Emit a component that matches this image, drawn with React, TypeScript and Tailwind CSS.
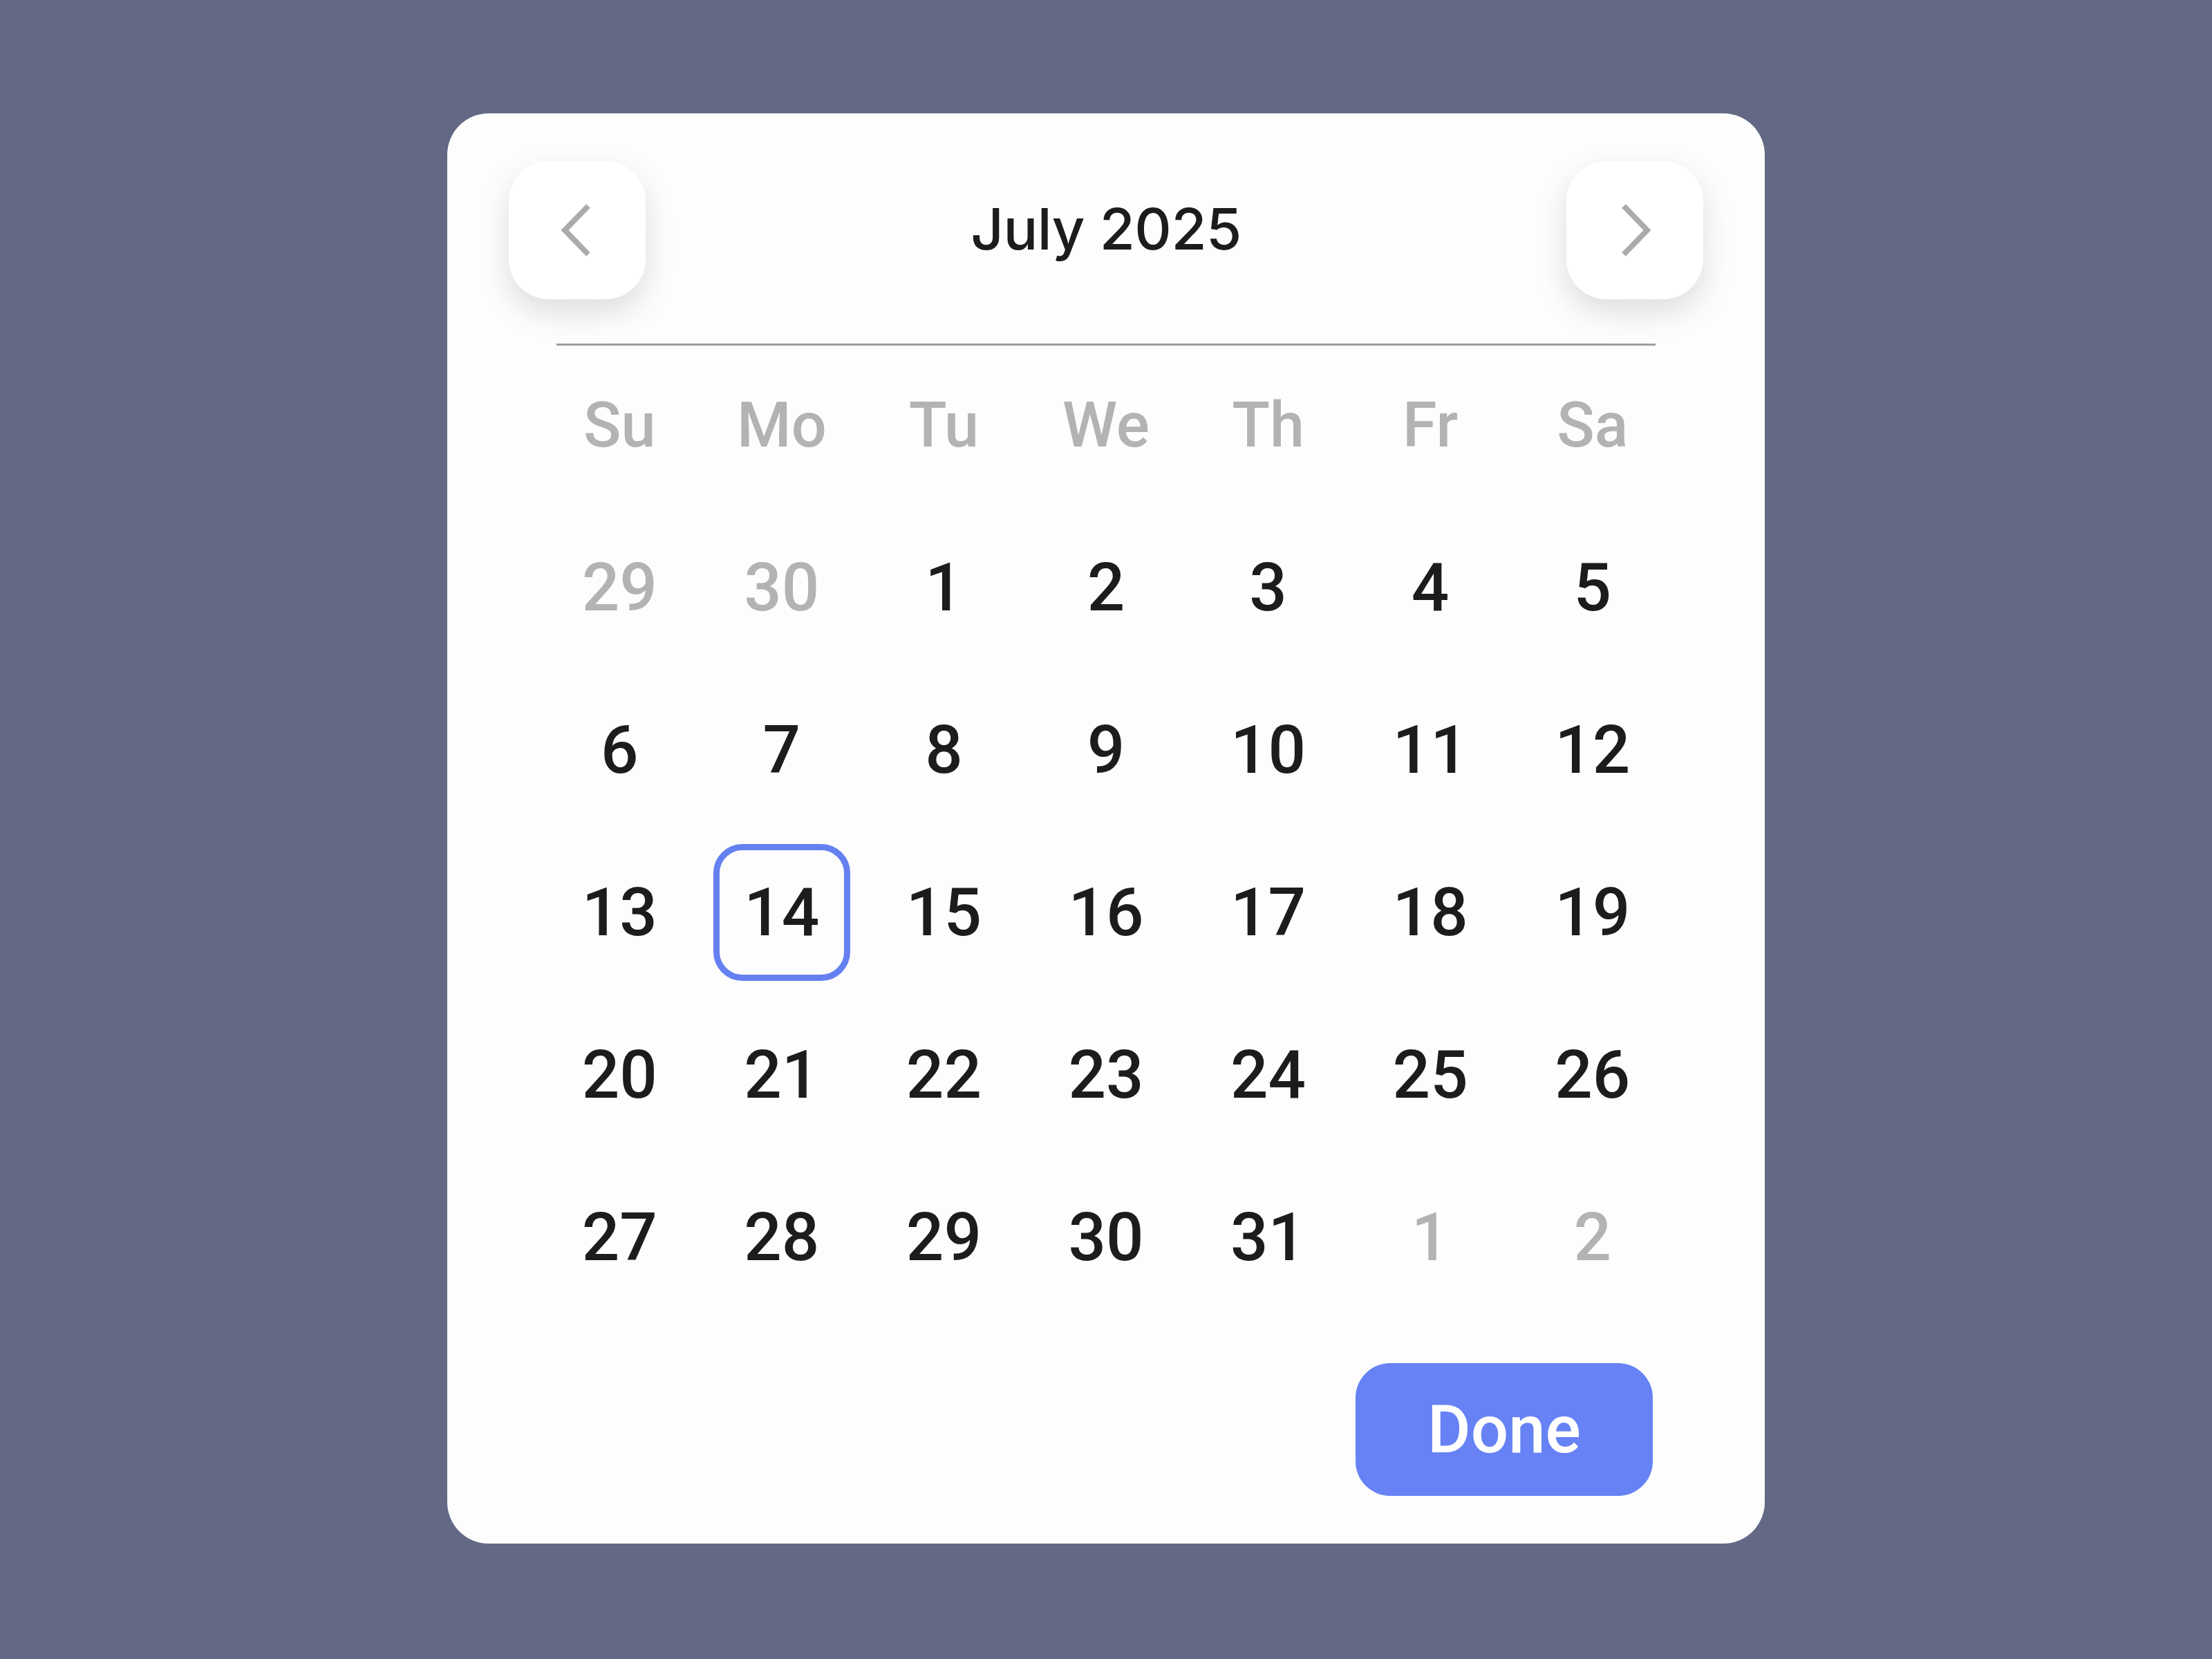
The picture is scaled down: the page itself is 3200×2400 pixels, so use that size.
import { useState } from 'react';

const weekdays = ['Su', 'Mo', 'Tu', 'We', 'Th', 'Fr', 'Sa'];

type Day = { n: number; muted?: boolean };

// July 2025 starts on a Tuesday, padded with the neighbouring months
const days: Day[] = [
  { n: 29, muted: true },
  { n: 30, muted: true },
  ...Array.from({ length: 31 }, (_, i) => ({ n: i + 1 })),
  { n: 1, muted: true },
  { n: 2, muted: true },
];

function Chevron({ dir }: { dir: 'left' | 'right' }) {
  const points = dir === 'right' ? '8,5 42,40 8,75' : '40,5 6,40 40,75';
  return (
    <svg width="48" height="80" viewBox="0 0 48 80" fill="none">
      <polyline points={points} stroke="#ababab" strokeWidth="8" strokeLinecap="butt" strokeLinejoin="miter" />
    </svg>
  );
}

function NavButton({ dir }: { dir: 'left' | 'right' }) {
  return (
    <button className="w-[198px] h-[200px] rounded-[58px] bg-white flex items-center justify-center shadow-[0_18px_44px_rgba(0,0,0,0.13)]">
      <Chevron dir={dir} />
    </button>
  );
}

export default function App() {
  const [selected, setSelected] = useState(14);

  return (
    <div className="min-h-screen w-full bg-[#636985] flex justify-center pt-[164px] font-['Roboto','Liberation_Sans',sans-serif]">
      <div className="w-[1906px] h-[2069px] rounded-[60px] bg-[#fdfdfd] px-[89px] pt-[69px] flex flex-col">
        <div className="h-[200px] flex items-center justify-between">
          <NavButton dir="left" />
          <h1 className="pb-[4px] text-[83px] leading-none font-medium text-[#1c1c1c] font-['Inter','Liberation_Sans',sans-serif] tracking-[-0.5px]">
            July 2025
          </h1>
          <NavButton dir="right" />
        </div>

        <div className="mt-[64px] mx-[69px] h-[3px] bg-[#9d9d9d]" />

        <div className="w-[1642px] mx-auto grid grid-cols-7">
          {weekdays.map((d) => (
            <div key={d} className="h-[235px] pb-[4px] flex items-center justify-center text-[90px] leading-none font-medium text-[#b3b3b3]">
              {d}
            </div>
          ))}
          {days.map((d, i) => {
            const isSel = !d.muted && d.n === selected;
            return (
              <div key={i} className="h-[235px] pb-[6px] flex items-center justify-center">
                <button
                  onClick={() => !d.muted && setSelected(d.n)}
                  className={
                    isSel
                      ? 'w-[198px] h-[198px] rounded-[42px] border-[9px] border-[#6580f0] flex items-center justify-center text-[96px] leading-none font-medium text-[#1c1c1c]'
                      : d.muted
                        ? 'w-[198px] h-[198px] flex items-center justify-center text-[96px] leading-none font-medium text-[#b3b3b3]'
                        : 'w-[198px] h-[198px] flex items-center justify-center text-[96px] leading-none font-medium text-[#1c1c1c]'
                  }
                >
                  {d.n}
                </button>
              </div>
            );
          })}
        </div>

        <div className="mt-[62px] pr-[73px] flex justify-end">
          <button className="w-[430px] h-[192px] rounded-[50px] bg-[#6682f4] text-white text-[96px] leading-none font-medium flex items-center justify-center">
            Done
          </button>
        </div>
      </div>
    </div>
  );
}
